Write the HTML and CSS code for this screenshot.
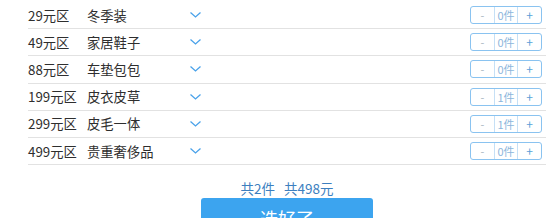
FILE: index.html
```html
<!DOCTYPE html>
<html lang="zh">
<head>
<meta charset="utf-8">
<link rel="stylesheet" href="styles.css">
</head>
<body>
<div class="page">
  <div class="list">
    <div class="row"><span class="price">29元区</span><span class="name">冬季装</span><svg class="chev" viewBox="0 0 11 6" width="11" height="6"><path d="M0.5 0.5 L5.5 5 L10.5 0.5" /></svg><span class="fill"></span><div class="stepper"><span class="minus">-</span><span class="count">0件</span><span class="plus">+</span></div></div>
    <div class="row"><span class="price">49元区</span><span class="name">家居鞋子</span><svg class="chev" viewBox="0 0 11 6" width="11" height="6"><path d="M0.5 0.5 L5.5 5 L10.5 0.5" /></svg><span class="fill"></span><div class="stepper"><span class="minus">-</span><span class="count">0件</span><span class="plus">+</span></div></div>
    <div class="row"><span class="price">88元区</span><span class="name">车垫包包</span><svg class="chev" viewBox="0 0 11 6" width="11" height="6"><path d="M0.5 0.5 L5.5 5 L10.5 0.5" /></svg><span class="fill"></span><div class="stepper"><span class="minus">-</span><span class="count">0件</span><span class="plus">+</span></div></div>
    <div class="row"><span class="price">199元区</span><span class="name">皮衣皮草</span><svg class="chev" viewBox="0 0 11 6" width="11" height="6"><path d="M0.5 0.5 L5.5 5 L10.5 0.5" /></svg><span class="fill"></span><div class="stepper"><span class="minus">-</span><span class="count">1件</span><span class="plus">+</span></div></div>
    <div class="row"><span class="price">299元区</span><span class="name">皮毛一体</span><svg class="chev" viewBox="0 0 11 6" width="11" height="6"><path d="M0.5 0.5 L5.5 5 L10.5 0.5" /></svg><span class="fill"></span><div class="stepper"><span class="minus">-</span><span class="count">1件</span><span class="plus">+</span></div></div>
    <div class="row"><span class="price">499元区</span><span class="name">贵重奢侈品</span><svg class="chev" viewBox="0 0 11 6" width="11" height="6"><path d="M0.5 0.5 L5.5 5 L10.5 0.5" /></svg><span class="fill"></span><div class="stepper"><span class="minus">-</span><span class="count">0件</span><span class="plus">+</span></div></div>
  </div>
  <div class="summary"><span>共2件</span><span>共498元</span></div>
  <div class="btn-wrap"><button class="btn">选好了</button></div>
</div>
</body>
</html>
```
FILE: styles.css
```css
html, body {
  margin: 0;
  padding: 0;
  background: #fff;
}
body {
  font-family: "Noto Sans CJK SC", "Noto Sans", sans-serif;
  color: #2e2e2e;
  overflow: hidden;
}
.page {
  width: 518px;
  margin-left: 28px;
  padding-top: 2px;
}
.row {
  display: flex;
  align-items: center;
  height: 26.2px;
  border-bottom: 1px solid #e2e2e2;
  font-size: 13.3px;
}
.price {
  width: 59px;
  flex: none;
}
.name {
  width: 102.5px;
  flex: none;
}
.chev {
  flex: none;
  fill: none;
  stroke: #4aa2ea;
  stroke-width: 1.3;
}
.fill {
  flex: 1;
}
.stepper {
  display: flex;
  width: 70px;
  height: 16px;
  border: 1px solid #8ac3f0;
  border-radius: 3px;
  margin-right: 4px;
  font-size: 11px;
  line-height: 16px;
}
.stepper span {
  flex: 1;
  text-align: center;
}
.minus {
  color: #a9b6c2;
}
.count {
  color: #8db6dc;
  border-left: 1px solid #c6e0f6;
  border-right: 1px solid #c6e0f6;
}
.plus {
  color: #5a9fd8;
  font-size: 12px;
}
.summary {
  display: flex;
  justify-content: center;
  gap: 9px;
  margin-top: 13px;
  height: 20px;
  line-height: 20px;
  font-size: 13.5px;
  color: #3d7fbf;
}
.btn-wrap {
  display: flex;
  justify-content: center;
}
.btn {
  width: 172px;
  height: 40px;
  border: none;
  border-radius: 3px;
  background: #3ca4ef;
  color: #fff;
  font-family: "Noto Sans CJK SC", sans-serif;
  font-size: 18px;
  padding: 0;
}
```
